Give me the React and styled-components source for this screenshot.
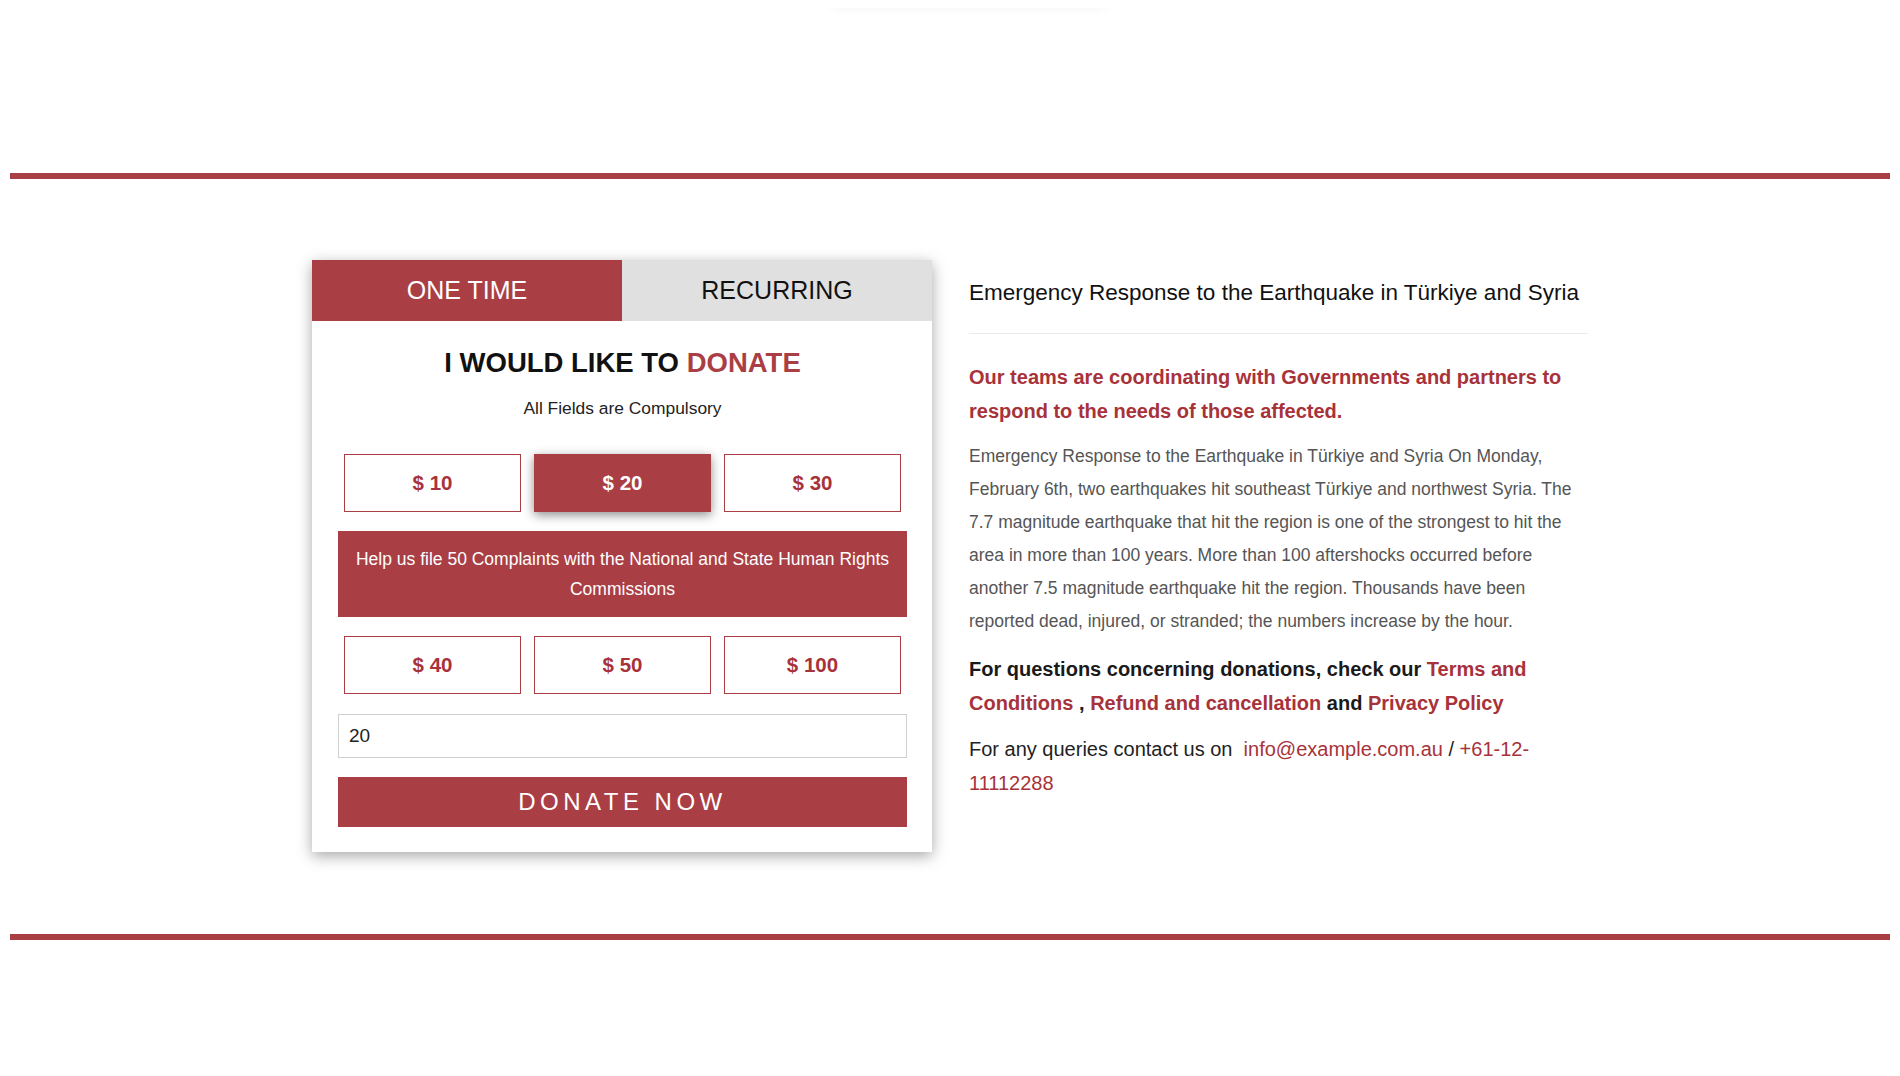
import React, { useState } from "react";
import styled, { createGlobalStyle } from "styled-components";

const red = "#aa3e45";
const textRed = "#a8323a";

const GlobalStyle = createGlobalStyle`
  body {
    margin: 8px;
    background: #fff;
    font-family: "Liberation Sans", Arial, sans-serif;
    overflow: hidden;
  }
  * {
    box-sizing: border-box;
  }
`;

export default function App() {
  const [mode, setMode] = useState("once");
  const [amount, setAmount] = useState(20);
  const firstRow = [10, 20, 30];
  const secondRow = [40, 50, 100];

  return (
    <Page>
      <GlobalStyle />
      <HeaderStub />
      <Rule />
      <Section>
        <Card>
          <Tabs>
            <Tab active={mode === "once"} onClick={() => setMode("once")}>
              ONE TIME
            </Tab>
            <Tab active={mode === "recurring"} onClick={() => setMode("recurring")}>
              RECURRING
            </Tab>
          </Tabs>
          <CardBody>
            <Heading>
              I WOULD LIKE TO <Accent>DONATE</Accent>
            </Heading>
            <Note>All Fields are Compulsory</Note>
            <AmountGrid>
              {firstRow.map((value) => (
                <Amount
                  key={value}
                  type="button"
                  selected={amount === value}
                  onClick={() => setAmount(value)}
                >
                  $ {value}
                </Amount>
              ))}
            </AmountGrid>
            <Impact>
              Help us file 50 Complaints with the National and State Human Rights
              Commissions
            </Impact>
            <AmountGrid>
              {secondRow.map((value) => (
                <Amount
                  key={value}
                  type="button"
                  selected={amount === value}
                  onClick={() => setAmount(value)}
                >
                  $ {value}
                </Amount>
              ))}
            </AmountGrid>
            <AmountInput
              value={amount}
              onChange={(e) => setAmount(Number(e.target.value) || e.target.value)}
            />
            <DonateButton type="button">DONATE NOW</DonateButton>
          </CardBody>
        </Card>

        <Info>
          <Title>Emergency Response to the Earthquake in Türkiye and Syria</Title>
          <Lead>
            Our teams are coordinating with Governments and partners to respond
            to the needs of those affected.
          </Lead>
          <Body>
            Emergency Response to the Earthquake in Türkiye and Syria On Monday,
            February 6th, two earthquakes hit southeast Türkiye and northwest
            Syria. The 7.7 magnitude earthquake that hit the region is one of the
            strongest to hit the area in more than 100 years. More than 100
            aftershocks occurred before another 7.5 magnitude earthquake hit the
            region. Thousands have been reported dead, injured, or stranded; the
            numbers increase by the hour.
          </Body>
          <Policy>
            For questions concerning donations, check our{" "}
            <Link href="#">Terms and Conditions</Link> ,{" "}
            <Link href="#">Refund and cancellation</Link> and{" "}
            <Link href="#">Privacy Policy</Link>
          </Policy>
          <Contact>
            For any queries contact us on&nbsp;{" "}
            <PlainLink href="#">info@example.com.au</PlainLink> /{" "}
            <PlainLink href="#">+61-12-11112288</PlainLink>
          </Contact>
        </Info>
      </Section>
      <Rule />
    </Page>
  );
}

const Page = styled.div`
  width: 100%;
`;

const HeaderStub = styled.div`
  width: 272px;
  height: 20px;
  margin: -28px 0 0 825px;
  background: #fff;
  box-shadow: 0 6px 14px rgba(0, 0, 0, 0.07);
`;

const Rule = styled.div`
  height: 6px;
  margin: 0 2px;
  background: ${red};

  ${HeaderStub} + & {
    margin-top: 173px;
  }
`;

const Section = styled.section`
  display: flex;
  justify-content: center;
  align-items: flex-start;
  gap: 37px;
  padding: 81px 0 82px;
`;

const Card = styled.div`
  width: 620px;
  background: #fff;
  box-shadow: 0 4px 14px rgba(0, 0, 0, 0.35);
`;

const Tabs = styled.div`
  display: grid;
  grid-template-columns: 1fr 1fr;
  height: 61px;
`;

const Tab = styled.div`
  display: flex;
  align-items: center;
  justify-content: center;
  font-size: 25px;
  cursor: pointer;
  background: ${(p) => (p.active ? red : "#e0e0e0")};
  color: ${(p) => (p.active ? "#fff" : "#111")};
`;

const CardBody = styled.div`
  display: flex;
  flex-direction: column;
  padding: 26px 25px 25px 26px;
`;

const Heading = styled.h2`
  margin: 0;
  text-align: center;
  font-size: 27.5px;
  line-height: 32px;
  font-weight: 700;
  color: #111;
`;

const Accent = styled.span`
  color: ${red};
`;

const Note = styled.p`
  margin: 19px 0 36px;
  text-align: center;
  font-size: 17.4px;
  line-height: 20px;
  color: #222;
`;

const AmountGrid = styled.div`
  display: grid;
  grid-template-columns: repeat(3, 1fr);
  gap: 13px;
  padding: 0 6px;
`;

const Amount = styled.button`
  height: 58px;
  border: 1px solid ${red};
  background: ${(p) => (p.selected ? red : "#fff")};
  color: ${(p) => (p.selected ? "#fff" : textRed)};
  box-shadow: ${(p) => (p.selected ? "0 3px 10px rgba(0, 0, 0, 0.45)" : "none")};
  font-family: "Liberation Sans", Arial, sans-serif;
  font-size: 20.5px;
  font-weight: 700;
  cursor: pointer;
`;

const Impact = styled.div`
  margin: 19px 0;
  padding: 13px 12px;
  background: ${red};
  color: #fff;
  font-size: 17.5px;
  line-height: 30px;
  text-align: center;
`;

const AmountInput = styled.input`
  margin-top: 20px;
  height: 44px;
  padding: 0 10px;
  border: 1px solid #d0d0d0;
  font-family: "Liberation Sans", Arial, sans-serif;
  font-size: 19px;
  color: #222;
  outline: none;
`;

const DonateButton = styled.button`
  margin-top: 19px;
  height: 50px;
  border: none;
  background: ${red};
  color: #fff;
  font-family: "Liberation Sans", Arial, sans-serif;
  font-size: 24px;
  letter-spacing: 4.5px;
  cursor: pointer;
`;

const Info = styled.div`
  width: 619px;
  padding-top: 20px;
`;

const Title = styled.h3`
  margin: 0;
  padding-bottom: 27px;
  border-bottom: 1px solid #ebebeb;
  font-size: 22.5px;
  line-height: 26px;
  font-weight: 400;
  color: #111;
`;

const Lead = styled.p`
  margin: 26px 0 0;
  font-size: 20px;
  line-height: 34px;
  font-weight: 700;
  color: ${textRed};
`;

const Body = styled.p`
  margin: 12px 0 0;
  font-size: 17.5px;
  line-height: 33px;
  color: #555;
`;

const Policy = styled.p`
  margin: 14px 0 0;
  font-size: 20px;
  line-height: 34px;
  font-weight: 700;
  color: #1a1a1a;
`;

const Link = styled.a`
  color: ${textRed};
  text-decoration: none;
`;

const Contact = styled.p`
  margin: 12px 0 0;
  font-size: 20px;
  line-height: 34px;
  color: #222;
`;

const PlainLink = styled.a`
  color: ${textRed};
  text-decoration: none;
`;
